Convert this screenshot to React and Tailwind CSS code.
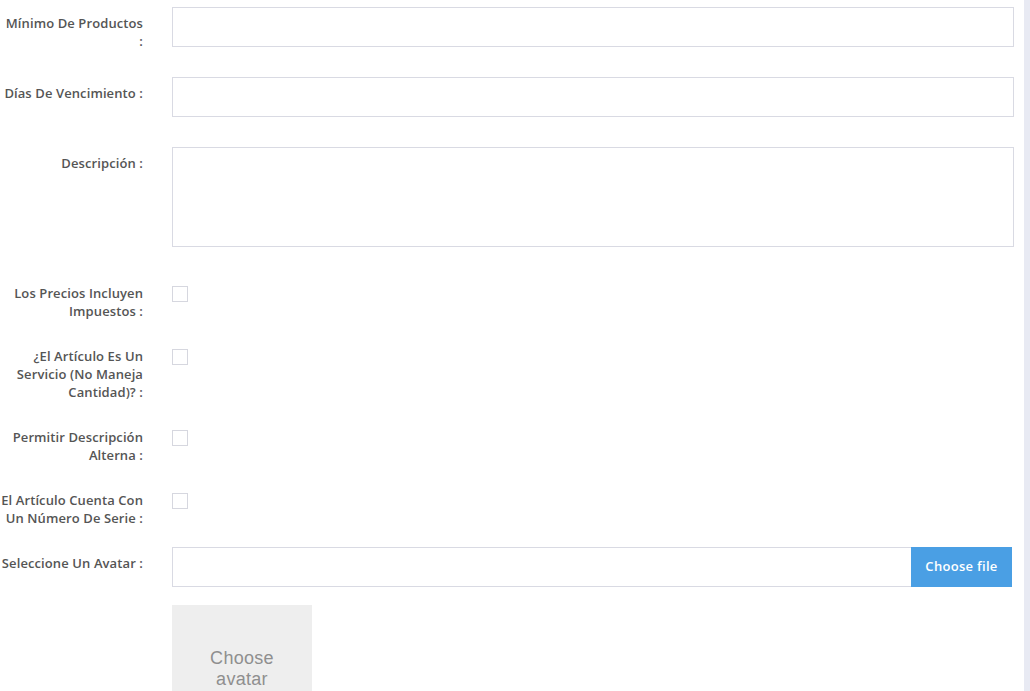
import React from 'react';

const labelCls =
  "w-[143px] shrink-0 text-right whitespace-nowrap text-[13px] leading-[18px] font-semibold tracking-[0.1px] text-[#555555] pt-[7px]";

const Row = ({ label, children, className = "" }) => (
  <div className={`flex ${className}`}>
    <label className={labelCls}>
      {label.map((line, i) => (
        <React.Fragment key={i}>
          {i > 0 && <br />}
          {line}
        </React.Fragment>
      ))}
    </label>
    <div className="ml-[29px] flex-1">{children}</div>
  </div>
);

const Check = () => (
  <div className="mt-[9px] w-4 h-4 border border-[#d6d7df] bg-white" />
);

const App = () => {
  return (
    <div
      className="min-h-screen bg-[#e8eaf3] flex"
      style={{ fontFamily: '"Open Sans", "Liberation Sans", sans-serif' }}
    >
      <div className="w-[1024px] h-[691px] overflow-hidden bg-white pt-[7px] pr-[10px]">
        <Row label={["Mínimo De Productos", ":"]} className="mb-[27px]">
          <input className="w-full h-10 border border-[#d9dae3] outline-none px-3 text-sm" />
        </Row>

        <Row label={["Días De Vencimiento :"]} className="mb-[30px]">
          <input className="w-full h-10 border border-[#d9dae3] outline-none px-3 text-sm" />
        </Row>

        <Row label={["Descripción :"]} className="mb-[30px]">
          <textarea className="block w-full h-[100px] border border-[#d9dae3] outline-none px-3 py-2 text-sm resize-none" />
        </Row>

        <Row label={["Los Precios Incluyen", "Impuestos :"]} className="mb-[20px]">
          <Check />
        </Row>

        <Row
          label={["¿El Artículo Es Un", "Servicio (No Maneja", "Cantidad)? :"]}
          className="mb-[20px]"
        >
          <Check />
        </Row>

        <Row label={["Permitir Descripción", "Alterna :"]} className="mb-[20px]">
          <Check />
        </Row>

        <Row label={["El Artículo Cuenta Con", "Un Número De Serie :"]} className="mb-[20px]">
          <Check />
        </Row>

        <Row label={["Seleccione Un Avatar :"]}>
          <div className="flex h-10">
            <div className="flex-1 border border-[#d9dae3] border-r-0" />
            <button className="w-[101px] mr-[2px] h-10 bg-[#4a9fe4] text-white text-[13px] font-semibold tracking-[0.3px]">
              Choose file
            </button>
          </div>
          <div
            className="mt-[18px] w-[140px] h-[140px] bg-[#eeeeee] text-[#8f8f8f] text-[18px] leading-[21px] tracking-[0.3px] text-center pt-[43px]"
            style={{ fontFamily: '"Liberation Sans", Arial, sans-serif' }}
          >
            Choose
            <br />
            avatar
          </div>
        </Row>
      </div>
    </div>
  );
};

export default App;
